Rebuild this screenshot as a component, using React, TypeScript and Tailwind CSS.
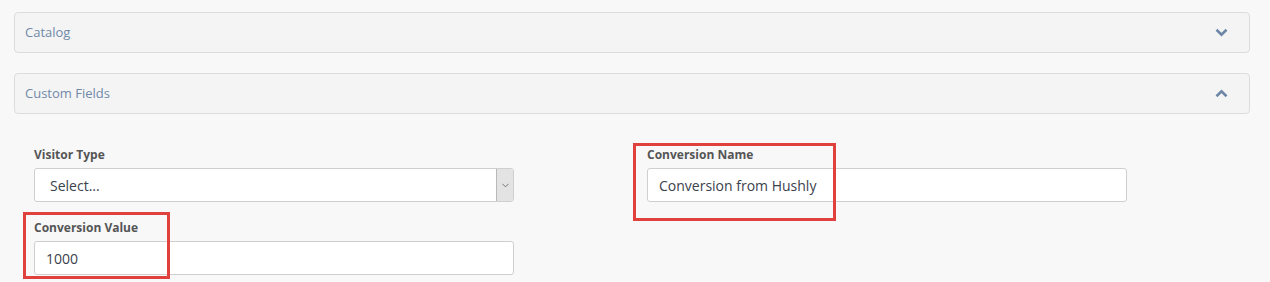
import { ChevronDown } from "lucide-react";

function Chevron({ up }: { up?: boolean }) {
  return (
    <svg width="13" height="9" viewBox="0 0 13 9" className={up ? "rotate-180" : ""}>
      <path d="M1.5 1.8 L6.5 6.6 L11.5 1.8" fill="none" stroke="#6d86a5" strokeWidth="2.6" strokeLinecap="butt" />
    </svg>
  );
}

function Panel({ title, open }: { title: string; open?: boolean }) {
  return (
    <div className="h-[41px] rounded-[4px] border border-[#dcdcdc] bg-[#f4f4f4] flex items-center justify-between pl-[10px] pr-[21px]">
      <span className="text-[13px] text-[#7089a8]">{title}</span>
      <Chevron up={open} />
    </div>
  );
}

function Field({
  label,
  value,
  select,
}: {
  label: string;
  value: string;
  select?: boolean;
}) {
  return (
    <div className="w-[480px]">
      <div className="text-[12px] font-bold leading-[17px] text-[#555] mb-[5px]">{label}</div>
      <div className="h-[34px] rounded-[3px] border border-[#cfcfcf] bg-white flex items-center overflow-hidden">
        <span className={`flex-1 text-[14px] text-[#3a424c] ${select ? "pl-[15px]" : "pl-[11px]"}`}>{value}</span>
        {select && (
          <div className="h-full w-[17px] bg-[#e3e3e3] border-l border-[#b9b9b9] flex items-center justify-center">
            <ChevronDown size={11} strokeWidth={1.5} className="text-[#444]" />
          </div>
        )}
      </div>
    </div>
  );
}

export default function App() {
  return (
    <main className="relative w-[1270px] h-[282px] overflow-hidden bg-[#f8f8f8] font-['Open_Sans',sans-serif] px-[14px] pr-[20px] pt-3">
      <Panel title="Catalog" />
      <div className="mt-5">
        <Panel title="Custom Fields" open />
      </div>

      {/* form */}
      <div className="flex gap-[133px] pl-[20px] pt-[32px]">
        <div className="flex flex-col gap-[17px]">
          <Field label="Visitor Type" value="Select..." select />
          <Field label="Conversion Value" value="1000" />
        </div>
        <div>
          <Field label="Conversion Name" value="Conversion from Hushly" />
        </div>
      </div>

      {/* annotation boxes */}
      <div className="absolute left-[633px] top-[143px] w-[203px] h-[78px] border-[3px] border-[#e0413d]" />
      <div className="absolute left-[23px] top-[212px] w-[147px] h-[67px] border-[3px] border-[#e0413d]" />
    </main>
  );
}
